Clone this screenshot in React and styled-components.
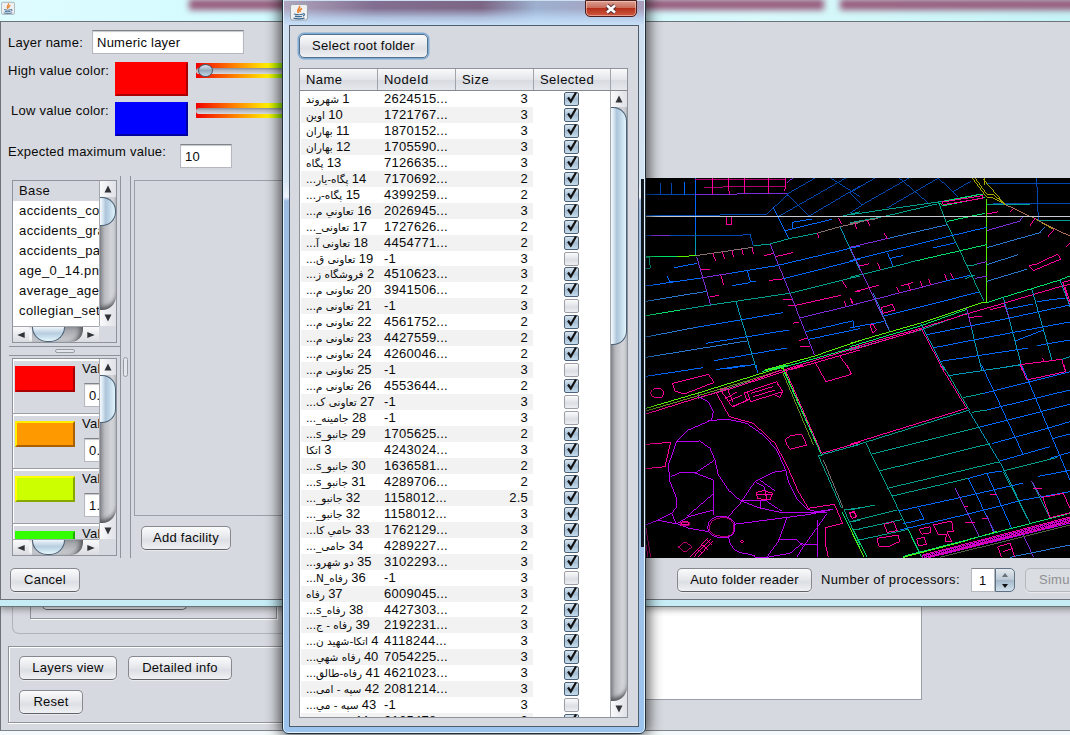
import React from "react";
import styled, { createGlobalStyle, css } from "styled-components";

const Global = createGlobalStyle`
  * { box-sizing: border-box; }
  html, body { margin: 0; padding: 0; overflow: hidden; }
  body { font: 13px/16px "Liberation Sans", Arial, "DejaVu Sans", sans-serif; color: #0a0a0a; letter-spacing: .25px; }
`;

const Desktop = styled.div`
  position: relative; width: 1070px; height: 735px; overflow: hidden; background: #f4fafc;
`;

/* ---------- windows ---------- */
const MainWindow = styled.div`
  position: absolute; left: 0; top: 600px; width: 1070px; height: 131px;
  background: #d6d9df; border-left: 1px solid #6d7378; border-bottom: 1px solid #80858a;
  display: grid; grid-template-columns: 645px 1fr;
`;
const Dialog = styled.div`
  position: absolute; left: 0; top: 0; width: 1080px; height: 607px;
  display: flex; flex-direction: column; background: linear-gradient(#dffbfe, #c6ecf5);
  border-bottom: 1px solid #69757a; box-shadow: 0 2px 7px rgba(0,0,0,.4);
`;
const DialogTitle = styled.div`
  height: 21px; flex: none; display: flex; align-items: flex-start; padding-left: 1px; overflow: hidden;
  background: linear-gradient(90deg, #dffcff 0, #c9faff 40%, #d9f9fb 70%, #c4f3f6 100%);
`;
const Haze = styled.div`
  width: ${p => p.$w}px; height: 11px; margin-left: ${p => p.$ml}px; background: ${p => p.$c || "#96597a"};
  filter: blur(3px); margin-top: -1px; flex: none;
`;
const DialogBody = styled.div`
  height: 579px; flex: none; background: #d6d9df; border: 1px solid #6d7378; border-right: 0;
  display: grid; grid-template-columns: 645px 1fr;
`;
const Modal = styled.div`
  position: absolute; left: 282px; top: -12px; width: 364px; height: 746px; padding-top: 12px;
  border: 1px solid #22303c; border-radius: 6px;
  box-shadow: 0 0 14px 3px rgba(0,0,0,.65), inset 0 0 0 1px #e4f2ff;
  background:
    linear-gradient(90deg, transparent 358px, #0b1118 358px, #172028 361px, transparent 362px) 0 190px / 100% 368px no-repeat,
    linear-gradient(#ccdff0 0, #d5e4f3 190px, #eef4fa 208px, #9dbde3 212px, #a1c1e6 520px, #9bc4ef 100%);
  display: flex; flex-direction: column;
`;
const ModalTitle = styled.div`
  height: 24px; flex: none; display: flex; justify-content: space-between; padding: 0 7px 0 6px;
  background: linear-gradient(transparent 30%, rgba(190,220,248,.75) 70%, #c8e0f8),
    linear-gradient(90deg, #b0a6bf, #826e90 25%, #7d6685 55%, #9db0cf 70%, #a99dba);
  margin: 0 1px;
`;
const TitleIcon = styled.div`flex: 1; padding-top: 3px;`;
const ModalBody = styled.div`
  flex: 1; min-height: 0; margin: 0 6px 6px 6px; border: 1px solid #4f5d6b; background: #d6d9df;
  padding: 8px 9px 8px 9px; display: flex; flex-direction: column;
`;
const Close = styled.div`
  width: 52px; height: 17px; margin-top: -1px; border: 1px solid #4c1f1f; border-radius: 0 0 5px 5px;
  background: linear-gradient(#d9a094, #cb6c5a 45%, #b5311c 50%, #cf5a40);
  box-shadow: inset 0 0 0 1px rgba(255,220,210,.5);
  display: flex; align-items: center; justify-content: center;
`;

/* ---------- controls ---------- */
const Button = styled.div`
  width: ${p => p.$w}px; height: 24px; flex: none; margin-left: ${p => p.$ml || 0}px;
  border: 1px solid #85888f; border-bottom-color: #5f6268; border-radius: 5px;
  background: linear-gradient(#fbfbfc, #e6e8ec 45%, #dcdfe4 60%, #f0f1f4);
  display: flex; align-items: center; justify-content: center; white-space: nowrap;
  box-shadow: 0 1px 1px rgba(255,255,255,.5);
  ${p => p.$focus && css`border-color: #53708c; box-shadow: 0 0 0 1.5px #7fabd4;`}
  ${p => p.$off && css`color: #8e8f91; border-color: #b4b7bd; background: #dadde2; justify-content: flex-start; padding-left: 13px;`}
`;
const Field = styled.div`
  width: ${p => p.$w}px; height: 24px; flex: none; background: #fff; border: 1px solid #b5b8be; border-top-color: #808388;
  box-shadow: inset 0 1px 1px #c5c7cb; padding: 4px 0 0 4px; overflow: hidden; white-space: nowrap;
`;
const Swatch = styled.div`
  width: ${p => p.$w || 73}px; height: ${p => p.$h || 34}px; flex: none; background: ${p => p.$c}; margin-left: ${p => p.$ml || 0}px;
  border: 2px solid; border-color: ${p => p.$hi || p.$c} ${p => p.$lo} ${p => p.$lo} ${p => p.$hi || p.$c};
`;

/* ---------- form ---------- */
const Form = styled.div`display: flex; flex-direction: column;`;
const FormRow = styled.div`
  display: flex; align-items: flex-start; height: ${p => p.$h}px; margin-top: ${p => p.$mt}px;
`;
const Label = styled.div`
  width: ${p => p.$w}px; flex: none; padding-left: 7px; padding-top: ${p => p.$pt}px;
  text-align: ${p => (p.$end ? "right" : "left")}; white-space: nowrap;
`;
const Slider = styled.div`
  margin: 1px 0 0 8px; width: 300px; height: 15px; padding: 5px 0; display: flex; align-items: center;
  background: linear-gradient(90deg, #f20000, #ff8000 38px, #fff000 72px, #80ff00 90px, #00ff40 140px, #0080ff 200px, #f0f);
`;
const Groove = styled.div`
  flex: 1; height: 6px; border-radius: 3px 0 0 3px; background: linear-gradient(#8a8d94, #b5b8c0 40%, #d7dae2);
  display: flex; align-items: center;
`;
const Knob = styled.div`
  width: 15px; height: 13px; margin-left: 2px; border-radius: 50%; border: 1px solid #46586a;
  background: linear-gradient(#dbe5ee, #94aabd 50%, #c3d6e4);
`;

const Split = styled.div`display: flex; height: 382px; margin-top: 8px; padding-left: 9px;`;
const Stack = styled.div`width: 110px; padding: 4px 0 2px 2px; display: flex; flex-direction: column;`;
const ScrollPane = styled.div`
  width: 105px; height: ${p => p.$h}px; flex: none; border: 1px solid #8f939b; background: #d6d9df;
  display: grid; grid-template-columns: 86px 17px; grid-template-rows: minmax(0, 1fr) 16px; overflow: hidden;
`;
const View = styled.div`background: ${p => p.$bg}; overflow: hidden; min-height: 0; min-width: 0;`;
const ListItem = styled.div`
  height: 20px; line-height: 20px; padding-left: 6px; white-space: nowrap; letter-spacing: .4px;
  background: ${p => (p.$sel ? "#d6d9df" : "#fff")};
`;
const HDivider = styled.div`
  height: 10px; margin: 3px -1px 2px -3px; border-top: 1px solid #8f939b; border-bottom: 1px solid #8f939b;
  display: flex; align-items: center; justify-content: center;
`;
const Grip = styled.div`
  width: ${p => p.$w}px; height: ${p => p.$h}px; border: 1px solid #959aa3; border-radius: 3px; background: #e4e6eb; flex: none;
`;
const VDivider = styled.div`
  width: 11px; border-left: 1px solid #8f939b; border-right: 1px solid #8f939b; flex: none;
  display: flex; align-items: center; justify-content: center;
`;
const Side = styled.div`flex: 1; display: flex; flex-direction: column; padding: 4px 0 0 3px;`;
const EmptyPane = styled.div`height: 336px; border: 1px solid #9a9ea6; margin-bottom: 10px;`;
const ColorItem = styled.div`
  height: 55px; border: 1px solid #9a9ea6; border-width: 0 0 1px; box-shadow: inset 1px 2px 0 #fff;
  display: grid; grid-template-columns: 60px 30px; padding: 7px 0 0 2px; column-gap: 7px; overflow: hidden;
`;
const ItemField = styled.div`
  display: flex; flex-direction: column; gap: 6px; margin-top: -5px;
  ${Field} { margin-left: 2px; }
`;

/* ---------- scrollbars ---------- */
const VBar = styled.div`
  width: 17px; min-height: 0; display: flex; flex-direction: column; border-left: 1px solid #a4a7ae;
  background: linear-gradient(90deg, #fafafb, #dfe1e6);
`;
const HBar = styled.div`
  height: 16px; display: flex; min-width: 0; border-top: 1px solid #a4a7ae; background: linear-gradient(#fafafb, #d9dbe0);
`;
const Arrow = styled.div`
  width: 16px; height: 16px; flex: none; display: flex; align-items: center; justify-content: center;
`;
const VTrack = styled.div`
  flex: 1; min-height: 0; border-radius: 0 0 14px 0; overflow: hidden;
  background: linear-gradient(90deg, #8f9196, #b9bbc0 30%, #cfd1d6 65%, #d6d8dd);
  box-shadow: inset 0 -4px 4px -1px #55575b;
`;
const VThumb = styled.div`
  height: ${p => p.$h}px; border: 2px solid #4a6076; border-width: 1.5px 1.5px 1.5px 0; border-radius: 0 14px 14px 0;
  background: linear-gradient(90deg, #f4f9fd, #ddeaf5 15%, #adc4da 38%, #c2d9ea 65%, #e3f5fb);
`;
const HTrack = styled.div`
  flex: 1; border-radius: 0 0 12px 0; overflow: hidden; padding-left: 3px;
  background: linear-gradient(90deg, #f4f5f6 0 3px, transparent 3px), linear-gradient(#9a9ca1, #cfd1d6);
  box-shadow: inset -5px 0 5px -2px #55575b;
`;
const HThumb = styled.div`
  width: 33px; height: 15px; border: 1.5px solid #4a6076; border-top: 0; border-radius: 0 0 15px 15px;
  background: linear-gradient(#f0f6fb, #b8cee0 45%, #c3dbea 65%, #e8f7fc);
`;
const Tri = ({ dir }) => (
  <svg width="8" height="8" viewBox="0 0 8 8">
    <path d={{ u: "M4 .5L7.5 7.5h-7z", d: "M4 7.5L7.5 .5h-7z", l: "M.3 4L7.7 1v6z", r: "M7.7 4L.3 1v6z" }[dir]} fill="#303338" />
  </svg>
);
const VScroll = ({ thumb }) => (
  <VBar><Arrow><Tri dir="u" /></Arrow><VTrack><VThumb $h={thumb} /></VTrack><Arrow><Tri dir="d" /></Arrow></VBar>
);
const HScroll = () => (
  <HBar><Arrow><Tri dir="l" /></Arrow><HTrack><HThumb /></HTrack><Arrow><Tri dir="r" /></Arrow></HBar>
);

/* ---------- right side ---------- */
const Right = styled.div`display: flex; flex-direction: column; padding-top: 156px; min-width: 0;`;
const MapView = styled.div`height: 380px; background: #000; overflow: hidden; svg { display: block; }`;
const Toolbar = styled.div`display: flex; align-items: flex-start; padding: 10px 0 0 31px;`;
const ToolLabel = styled.div`padding: 4px 0 0 9px; width: 159px; flex: none; white-space: nowrap; letter-spacing: .35px;`;
const Spinner = styled.div`display: flex; width: 44px; height: 24px; margin-right: 10px; flex: none;`;
const SpinField = styled.div`
  width: 24px; background: #fff; border: 1px solid #b5b8be; border-top-color: #808388; padding: 4px 0 0 7px;
`;
const SpinButtons = styled.div`
  width: 20px; border: 1px solid #5f7183; border-radius: 0 5px 5px 0; display: flex; flex-direction: column;
  background: linear-gradient(#e3e9ee, #bdcad5 48%, #5f7183 48%, #5f7183 52%, #a3b8ca 52%, #d1e0eb);
  align-items: center; justify-content: space-around;
`;

/* ---------- main window leftovers ---------- */
const Lower = styled.div`padding-left: 7px; display: flex; flex-direction: column;`;
const Tail = styled.div`
  height: 34px; margin: 0 0 12px 4px; border: 1px solid #b0b3b9; border-top: 0; border-bottom-left-radius: 7px; padding-left: 17px;
`;
const TailInner = styled.div`
  width: 247px; height: 19px; border: 1px solid #8f939b; border-top: 0; box-shadow: 1px 1px 0 #fff; padding-left: 11px;
`;
const TailButton = styled.div`
  width: 145px; height: 10px; border: 1px solid #5f6268; border-top: 0; border-radius: 0 0 5px 5px; background: #e8eaee;
`;
const Group = styled.div`
  height: 77px; width: 560px; border: 1px solid #8f939b; box-shadow: inset 1px 1px 0 #fff, 0 1px 0 #fff;
  padding: 9px 0 0 10px; display: grid; grid-template-columns: 98px 104px; gap: 10px 11px; align-content: start;
`;
const WhitePane = styled.div`width: 276px; height: 100px; background: #fff; border: 1px solid #9a9ea6; border-left: 0;`;

/* ---------- table ---------- */
const cols = "78px 78px 78px 77px 1fr";
const Table = styled.div`
  flex: 1; min-height: 0; width: 329px; margin-top: 10px; border: 1px solid #8f939b; background: #fff;
  display: flex; flex-direction: column; overflow: hidden;
`;
const THead = styled.div`
  height: 22px; flex: none; display: grid; grid-template-columns: ${cols}; border-bottom: 1px solid #85888f;
  background: linear-gradient(#fafafb, #e3e5ea 50%, #d8dbe1 55%, #e6e8ec);
`;
const Th = styled.div`
  border-right: 1px solid #a0a4ab; padding: 3px 0 0 6px; letter-spacing: .45px; &:last-child { border: 0; }
`;
const TBody = styled.div`
  flex: 1; min-height: 0; display: grid; grid-template-columns: 310px 17px; grid-template-rows: minmax(0, 1fr);
`;
const Rows = styled.div`min-height: 0; overflow: hidden;`;
const Row = styled.div`
  height: 15.96px; display: grid; grid-template-columns: 78px 78px 78px 76px; line-height: 16px;
  background: linear-gradient(${p => (p.$odd ? "#f2f2f2, #f2f2f2" : "#fff, #fff")}) 1px 0 / 232px 100% no-repeat;
`;
const Cell = styled.div`padding: 0 6px; white-space: nowrap; text-align: ${p => (p.$end ? "right" : "left")};`;
const NameCell = styled.div`padding-left: 6px; white-space: nowrap; height: 16px;`;
const Persian = styled.span`
  direction: rtl; unicode-bidi: isolate; display: inline-block; letter-spacing: 0; height: 16px;
  font: 10.5px/16px "DejaVu Sans", sans-serif;
`;
const Num = styled.span`font: 13px/16px "Liberation Sans", sans-serif; letter-spacing: .2px;`;
const CheckCell = styled.div`display: flex; justify-content: center; padding: 1px 1px 0 0;`;
const Check = styled.div`
  width: 15px; height: 14px; border: 1px solid ${p => (p.$on ? "#4b6074" : "#9b9ea5")}; border-radius: 2px;
  background: ${p => (p.$on ? "linear-gradient(#dbe7f1, #a5bdd2 50%, #c5dcec)" : "linear-gradient(#fbfbfc, #dcdee4 60%, #efeff3)")};
  svg { display: block; margin: -2px 0 0 1px; overflow: visible; }
`;

const JavaIcon = () => (
  <svg width="18" height="17" viewBox="0 0 18 17">
    <rect x=".5" y=".5" width="17" height="15.5" rx="2" fill="#eef0f2" stroke="#9aa4ad" />
    <path d="M9.5 2C11 4 6 5 8.500 9M12 4.500C9 6 9.500 7 10.500 8" fill="none" stroke="#e87a1e" strokeWidth="1.500" />
    <path d="M4 10q5 1.500 9 0M5 12.200q4 1 7 0M3.500 14.200q6 1.300 11 0M13 9.500q3 .5 0 2.800" fill="none" stroke="#3d6b94" strokeWidth="1.200" />
  </svg>
);

const rows = [
  ["1", "شهروند", "2624515...", "3", 1], ["10", "اوین", "1721767...", "3", 1], ["11", "بهاران", "1870152...", "3", 1],
  ["12", "بهاران", "1705590...", "3", 1], ["13", "پگاه", "7126635...", "3", 1], ["14", "پگاه-یار...", "7170692...", "2", 1],
  ["15", "پگاه-ر...", "4399259...", "2", 1], ["16", "تعاوني م...", "2026945...", "3", 1], ["17", "تعاونی_...", "1727626...", "2", 1],
  ["18", "تعاونی آ...", "4454771...", "2", 1], ["19", "تعاونی ق...", "-1", "3", 0], ["2", "فروشگاه ز...", "4510623...", "3", 1],
  ["20", "تعاونی م...", "3941506...", "2", 1], ["21", "تعاونی م...", "-1", "3", 0], ["22", "تعاونی م...", "4561752...", "2", 1],
  ["23", "تعاونی م...", "4427559...", "2", 1], ["24", "تعاونی م...", "4260046...", "2", 1], ["25", "تعاونی م...", "-1", "3", 0],
  ["26", "تعاونی م...", "4553644...", "2", 1], ["27", "تعاونی ک...", "-1", "3", 0], ["28", "جامینه_...", "-1", "3", 0],
  ["29", "جانبو_s...", "1705625...", "2", 1], ["3", "اتکا", "4243024...", "3", 1], ["30", "جانبو_s...", "1636581...", "2", 1],
  ["31", "جانبو_s...", "4289706...", "2", 1], ["32", "جانبو_...", "1158012...", "2.5", 1], ["32", "جانبو_...", "1158012...", "3", 1],
  ["33", "حامي کا...", "1762129...", "3", 1], ["34", "حامی_...", "4289227...", "2", 1], ["35", "دو شهرو...", "3102293...", "3", 1],
  ["36", "رفاه_N...", "-1", "3", 0], ["37", "رفاه", "6009045...", "3", 1], ["38", "رفاه_s...", "4427303...", "2", 1],
  ["39", "رفاه - ج...", "2192231...", "3", 1], ["4", "اتکا-شهید ن...", "4118244...", "3", 1], ["40", "رفاه شهي...", "7054225...", "3", 1],
  ["41", "رفاه-طالق...", "4621023...", "3", 1], ["42", "سپه - امی...", "2081214...", "3", 1], ["43", "سپه - مي...", "-1", "3", 0],
  ["44", "سپه - م...", "2165478...", "3", 1],
];

/* ---------- street map: four tiles drawn at triple scale ---------- */
const B = "#0068ff", D = "#0048b0", P = "#7c2cd4", M = "#ff0099", K = "#b0006e", T = "#009c8c", C = "#0098b4",
  G = "#00e068", L = "#58f000", V = "#b400ee", O = "#a8a800", W = "#886f70", S = "#2478d0";
const tiles = [
  { x: 640, y: 170, lines: [
    [D, "M18 74H165M63 40V74M96 40V74M18 138H240M240 134H378L445 73"], [B, "M133 35V74M166 74V190M166 24V74"], [C, "M166 190V258"],
    [P, "M165 74H290M290 71H440M440 40L458 24"], [K, "M166 30H437M192 54H248M248 50H437"], [M, "M218 24V72M266 24V60L270 72M313 24V70M387 24V70M437 24V50L433 64M260 138V164H274V138"],
    [D, "M442 72L525 24M442 72L508 138L660 48M418 138L618 24M572 24L660 80"], [B, "M400 112L447 206M435 182L575 148M457 157L515 147M457 157V175"],
    [T, "M610 138L660 125M338 228L390 222L447 206L530 190"], [W, "M168 257L338 232M530 190L600 170L660 158"],
    [D, "M18 197H288L330 193L340 228"], [P, "M30 198H90"], [G, "M18 260H110"], [L, "M110 260L168 257"], [T, "M18 262H28L31 295H18"],
    [M, "M218 250L227 272M247 247L254 268M275 241L281 260M305 238L310 255M337 233L340 251M372 257L400 250M406 260L459 248M388 331L437 326M182 300L210 298M210 380L238 376M242 315L251 345M532 190L538 205M595 145L605 161M646 161L650 178M430 388H455M445 407H463L602 376M458 460L478 456M478 511L500 505M480 531L510 528M605 330L620 353M613 393L618 410M632 385L641 405M645 364H660"],
    [P, "M170 260L212 405M390 222L432 325L524 556M182 324L270 310"], [B, "M102 293L172 280M18 348L182 324M82 318L90 336M90 336L100 336M270 310L410 287L660 228M322 304L332 335H348M275 347L330 338"],
    [P, "M480 444L660 400"], [B, "M430 326L620 278L660 268M495 486L640 452V475M505 508L660 476"],
    [S, "M18 394L200 364M18 501L168 472M18 562L320 513"], [B, "M168 472L305 449L430 428M198 520L447 480M222 572L440 534M258 597L345 583"], [C, "M288 395L350 600"],
    [G, "M18 437L120 420"], [T, "M120 420L212 405L448 370L600 332L660 318"], [L, "M375 600L524 558L660 512"], [G, "M400 600L660 528"], [M, "M430 600L660 530M450 600L660 540M525 575L538 600M600 558L628 600"], [C, "M600 170L632 240L660 300"]
  ] },
  { x: 850, y: 170, lines: [
    [D, "M0 68L75 24M0 68L36 105L0 130M36 105L177 24M148 24L238 102M110 115L265 24L325 82M310 65L362 34M410 42H660M560 24L565 150M430 102H660"],
    [T, "M0 134L265 96L395 72M0 158L100 140L260 102M410 104H540M565 152H660"], [G, "M265 96L278 108L405 82M275 95L398 72M405 130L292 154"], [M, "M277 96L398 77V85L280 104Z"],
    [O, "M367 24L410 82L430 84L465 103L555 146L610 178M375 24L410 72L430 74L465 103M400 28L465 103M405 24V45"], [L, "M410 88V398"],
    ["#b07050", "M465 103L555 146L620 180L660 198"], [T, "M265 96L290 160L402 394"], [W, "M0 161L85 145"],
    [P, "M0 232L110 206M410 182L510 153L520 137"], [S, "M110 206L292 164M410 233L570 188L585 170M410 284L505 254M410 334L530 298"],
    [B, "M0 272L305 197M305 197L410 172M112 248L130 290M120 265L158 257M248 234L318 218"], [G, "M200 272L410 224"], [T, "M0 322L130 290L200 272M352 288L380 284M345 326L375 315"],
    [P, "M380 282L410 275M375 325L410 318M0 407L280 335M0 232L120 486"], [B, "M280 335L360 316M0 474L103 454M103 438L388 366"], [S, "M70 370L120 486"],
    [M, "M15 160L20 178M52 150L60 168M103 190L112 206M28 288L58 281M15 365L88 345M82 278L92 300M140 352L148 368M152 348L190 337M175 340L181 362M210 332L217 350M236 328L243 346M284 312L290 330M302 310L311 328M93 413L127 403L135 420L100 430ZM60 465L69 462L79 480L68 489ZM0 385L8 402M357 443L395 438M420 419L464 408M410 132L445 125M555 145L540 168M612 178L594 200M480 125L490 115M650 230L660 220M537 287L560 282L622 253L633 267L550 302Z"],
    [L, "M0 520L212 459L402 396L412 398"], [G, "M0 530L210 468L350 418M412 398L460 382L545 356L630 330L660 318"], [T, "M0 540L212 480L350 430"],
    [M, "M0 535L215 474L350 432L460 400L640 347L660 343M0 542L215 478L280 600M638 337L660 332M638 337L660 410M645 350L660 395"],
    [C, "M212 460L284 600M350 415L395 600M460 382L514 585M545 356L606 570M630 330L660 410"],
    [P, "M350 415L365 475M462 400L480 450"], [B, "M230 494L460 448L660 405M252 533L485 488L660 456M272 574L535 534M470 418L550 402M560 395L645 384M496 513L580 480M560 527L660 510"], [C, "M412 600L510 584L635 568L660 560"], [M, "M510 584L635 568L645 600M510 584L516 600M578 565L582 576"]
  ] },
  { x: 640, y: 365, lines: [
    [B, "M18 34L190 8M228 14L320 0M348 0L353 24"], [L, "M18 130L175 84L330 36L418 8L430 10L545 272M418 8L445 0"], ["#689020", "M18 138L175 92L330 45L425 15L520 240"], [G, "M430 15L545 272M440 0L365 20M605 440L660 550"], [T, "M535 272L660 238M535 272L605 430"], ["#707070", "M550 285L610 430M175 84V100L330 48"],
    [M, "M18 147L175 98L270 72L430 20L488 0M435 12L545 265L660 232M97 55L205 28L223 52L133 87L105 78ZM240 75L260 68M228 82L268 155L340 175L405 235L440 300L475 380L505 430L583 418L608 475L556 488L557 540L565 577M330 50L425 15M262 72L280 112M245 80L276 124L322 107L312 84L410 50L428 80L332 110L322 80M256 100L290 82M264 110L305 90M280 125L330 100M333 85L398 65M340 95L405 75M412 57L428 78L420 97L405 90M530 0L558 50L634 28L622 0M440 238L436 225L450 212L485 207L500 240L450 253ZM18 238L92 232L75 305L18 311M32 85Q34 70 52 70T70 85T52 98T32 85"],
    [V, "M175 95L205 110L220 140L215 165L145 195L110 230L85 300L90 350L110 400L110 425L95 445M205 168L260 162L320 175L370 210L410 255L437 315L445 350L470 400L500 432L530 440L578 433M110 230L180 228L210 250L225 285L235 330L265 375L305 410L265 455M92 335L120 323L165 324L220 345V450M165 324L222 287M305 408L345 350L400 322L437 316M305 408L355 428L425 443H560M280 478L405 462L510 448L578 433M18 480L55 465L95 445M50 465L110 477L145 455L220 435M95 445L108 475L148 490L205 500M140 455L218 388M345 350L372 365L380 395M360 345L405 378M305 408H380L425 440M362 428V405M440 460L415 530L380 577M415 525L470 524L490 545L560 447M534 465V577M490 540H530M265 512Q270 560 310 565T345 577H380L450 565L490 532M470 577L490 545"],
    [K, "M208 487Q210 460 245 458T282 487T245 514T208 487M115 546L135 530L157 545L135 562ZM122 472H148V481H122ZM18 490L32 577M18 540L24 577"], [V, "M203 487Q205 454 245 454T285 487T245 518T203 487"],
    [M, "M350 382L370 377L398 385L390 405L352 401ZM375 377L380 403M352 390H395M125 470V480H145V470ZM302 528H310V532H302ZM205 518L150 577M212 522L160 577M220 528L172 577M200 525L215 540M187 540L203 553M175 555L190 565"], [T, "M612 435L660 428M612 435L660 540M640 470L660 465M645 495H660"], [M, "M628 443L642 440L650 455L635 460Z"]
  ] },
  { x: 850, y: 365, lines: [
    [M, "M270 0L350 130L0 238M0 20L6 26M512 0L530 45L647 20L642 0"], [T, "M278 0L358 135L0 246M295 32L510 0M340 98L400 85M365 142L410 135M47 233L210 565M62 268L395 185M88 318L420 236M112 370L450 290M127 393L355 340M458 318L620 278M0 435L75 420M0 470L140 435M8 496L155 464M28 525L175 493"],
    [C, "M355 135L460 310L540 475M295 32L510 0"], [B, "M395 0L520 270M515 0L660 345M400 85L660 20M410 135L660 75M390 186L660 118M425 236L592 190L660 170M450 288L600 245M610 220L660 207M600 280L660 262M355 340L410 325L455 318M565 334L660 316M145 438L320 400L520 354M160 476L222 462L205 428M150 495L350 448L520 405L660 380M410 325L485 490M355 340L435 505"], [T, "M460 320L540 475M545 348L600 460"],
    [P, "M315 370L388 515M545 348L575 400M410 450L432 505M520 510L550 575"], [L, "M0 490L42 577M160 577L320 535L440 500"], [G, "M8 490L52 577M175 495L215 577M160 574L660 445"], ["#506040", "M270 577L660 480"], [S, "M480 577L660 540"],
    [M, "M342 426L355 426M345 472H375M395 460H410M420 390H440M550 370H575M102 478L130 470L142 497L112 502ZM82 520L145 510L148 530L115 545L85 543ZM207 493L240 485L242 503L215 508ZM200 522L222 517L230 538L206 543ZM250 480L305 468L310 500L290 500L305 530L285 528L290 510L265 508ZM578 397L640 385L660 430M578 397L600 458L660 443M0 445L14 440L18 455L5 460ZM443 545L480 535L495 577M443 545L455 577M460 560L490 550"],
    [V, "M215 574L660 460M225 577L660 466M240 577L660 474"], [M, "M218 570L660 456M235 577L660 470"]
  ] },
];

const StreetMap = () => (
  <svg width="424" height="380" viewBox="646 178 424 380" fill="none" shapeRendering="crispEdges">
    {tiles.map((t, i) => (
      <g key={i} transform={`translate(${t.x} ${t.y}) scale(.33333)`}>
        {t.lines.map(([c, d], j) => <path key={j} d={d} stroke={c} strokeWidth="3" />)}
      </g>
    ))}
    <path d="M922 557L1070 520" stroke="#d000b0" strokeWidth="5" strokeDasharray="1 1" />
    <path d="M646 216.500H1070" stroke="#c8ccd0" strokeWidth="1.500" />
  </svg>
);

const files = ["Base", "accidents_count", "accidents_graph", "accidents_parts", "age_0_14.png", "average_age.png", "collegian_set.png", "cost_set.png"];
const items = [["#ff0000", "#ff0000", "#a80000", "0.0"], ["#ff9900", "#ffee00", "#a86000", "0.5"], ["#ccff00", "#ffff00", "#88a800", "1.0"], ["#33ff00", "#33ff00", "#20a800", "1.5"]];

export default function App() {
  return (
    <Desktop>
      <Global />
      <MainWindow>
        <Lower>
          <Tail><TailInner><TailButton /></TailInner></Tail>
          <Group>
            <Button $w={98}>Layers view</Button>
            <Button $w={104}>Detailed info</Button>
            <Button $w={64}>Reset</Button>
          </Group>
        </Lower>
        <WhitePane />
      </MainWindow>

      <Dialog>
        <DialogTitle><JavaIcon /><Haze $w={635} $ml={174} /><Haze $w={240} $ml={16} /></DialogTitle>
        <DialogBody>
          <Form>
            <FormRow $h={24} $mt={8}>
              <Label $w={91} $pt={5}>Layer name:</Label><Field $w={152}>Numeric layer</Field>
            </FormRow>
            <FormRow $h={34} $mt={8}>
              <Label $w={114} $pt={1}>High value color:</Label><Swatch $c="#ff0000" $lo="#a80000" />
              <Slider><Groove><Knob /></Groove></Slider>
            </FormRow>
            <FormRow $h={34} $mt={6}>
              <Label $w={108} $pt={1} $end>Low value color:</Label><Swatch $ml={6} $c="#0000ff" $lo="#0000a0" />
              <Slider><Groove /></Slider>
            </FormRow>
            <FormRow $h={24} $mt={8}>
              <Label $w={179} $pt={0}>Expected maximum value:</Label><Field $w={52}>10</Field>
            </FormRow>
            <Split>
              <Stack>
                <ScrollPane $h={163}>
                  <View $bg="#fff">{files.map((f, i) => <ListItem key={f} $sel={i === 0}>{f}</ListItem>)}</View>
                  <VScroll thumb={29} />
                  <HScroll />
                </ScrollPane>
                <HDivider><Grip $w={20} $h={4} /></HDivider>
                <ScrollPane $h={198}>
                  <View $bg="#d6d9df">
                    {items.map(([c, hi, lo, v]) => (
                      <ColorItem key={c}>
                        <Swatch $w={60} $h={26} $c={c} $hi={hi} $lo={lo} />
                        <ItemField>Value<Field $w={40}>{v}</Field></ItemField>
                      </ColorItem>
                    ))}
                  </View>
                  <VScroll thumb={48} />
                  <HScroll />
                </ScrollPane>
              </Stack>
              <VDivider><Grip $w={5} $h={20} /></VDivider>
              <Side><EmptyPane /><FormRow $h={24} $mt={0}><Button $w={90} $ml={7}>Add facility</Button></FormRow></Side>
            </Split>
            <FormRow $h={24} $mt={10}><Button $w={70} $ml={9}>Cancel</Button></FormRow>
          </Form>
          <Right>
            <MapView><StreetMap /></MapView>
            <Toolbar>
              <Button $w={135}>Auto folder reader</Button>
              <ToolLabel>Number of processors:</ToolLabel>
              <Spinner>
                <SpinField>1</SpinField>
                <SpinButtons>
                  <svg width="6" height="4" viewBox="0 0 6 4"><path d="M3 0L6 4H0z" fill="#66717c" /></svg>
                  <svg width="6" height="4" viewBox="0 0 6 4"><path d="M3 4L6 0H0z" fill="#111" /></svg>
                </SpinButtons>
              </Spinner>
              <Button $w={90} $off>Simulate</Button>
            </Toolbar>
          </Right>
        </DialogBody>
      </Dialog>

      <Modal>
        <ModalTitle>
          <TitleIcon><JavaIcon /></TitleIcon>
          <Close>
            <svg width="14" height="12" viewBox="0 0 14 12">
              <path d="M3 2.500L11 9.500M11 2.500L3 9.500" stroke="#5a3036" strokeWidth="4.500" />
              <path d="M3 2.500L11 9.500M11 2.500L3 9.500" stroke="#fff" strokeWidth="2.600" />
            </svg>
          </Close>
        </ModalTitle>
        <ModalBody>
          <Button $w={129} $focus>Select root folder</Button>
          <Table>
            <THead><Th>Name</Th><Th>NodeId</Th><Th>Size</Th><Th>Selected</Th><Th /></THead>
            <TBody>
              <Rows>
                {rows.map(([n, name, id, size, on], i) => (
                  <Row key={i} $odd={i % 2}>
                    <NameCell><Persian><Num>{n}</Num> {name}</Persian></NameCell>
                    <Cell>{id}</Cell>
                    <Cell $end>{size}</Cell>
                    <CheckCell>
                      <Check $on={on}>
                        {on ? <svg width="12" height="12" viewBox="0 0 12 12"><path d="M2 6.500L4.800 10.500L10 1.500" fill="none" stroke="#111" strokeWidth="2.200" /></svg> : null}
                      </Check>
                    </CheckCell>
                  </Row>
                ))}
              </Rows>
              <VScroll thumb={238} />
            </TBody>
          </Table>
        </ModalBody>
      </Modal>
    </Desktop>
  );
}
